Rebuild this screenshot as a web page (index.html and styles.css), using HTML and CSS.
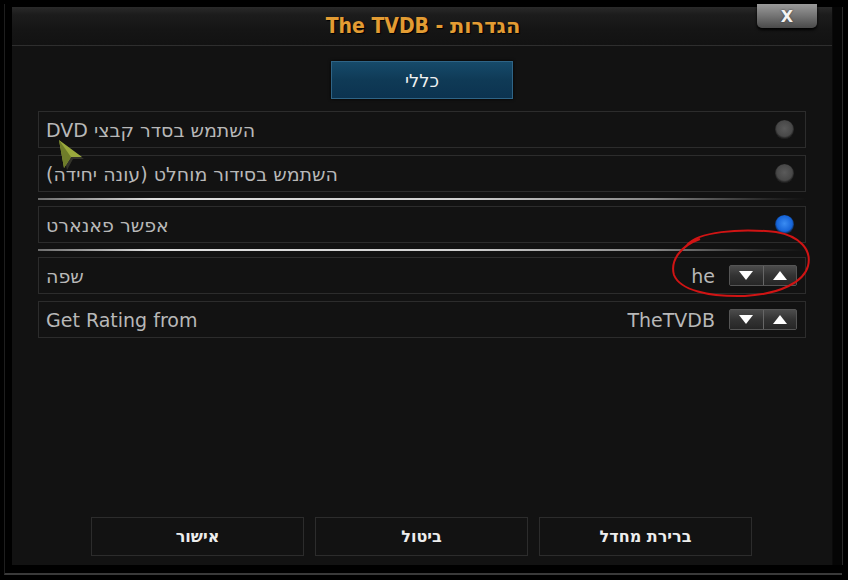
FILE: index.html
```html
<!DOCTYPE html>
<html lang="he">
<head>
    <meta charset="UTF-8">
    <title>The TVDB - הגדרות</title>
    <link rel="stylesheet" href="styles.css">
</head>
<body>
    <div class="frame">
        <div class="dialog">
            <header class="dialog-header">
                <h1>The TVDB - <span dir="rtl">הגדרות</span></h1>
                <a href="#" class="close">X</a>
            </header>

            <div class="tabs">
                <div class="tab active" dir="rtl">כללי</div>
            </div>

            <div class="settings">
                <div class="row">
                    <span class="label" dir="rtl">השתמש בסדר קבצי DVD</span>
                    <span class="radio"></span>
                </div>
                <div class="row next">
                    <span class="label" dir="rtl">השתמש בסידור מוחלט (עונה יחידה)</span>
                    <span class="radio"></span>
                </div>
                <div class="separator"></div>
                <div class="row">
                    <span class="label" dir="rtl">אפשר פאנארט</span>
                    <span class="radio on"></span>
                </div>
                <div class="separator"></div>
                <div class="row">
                    <span class="label" dir="rtl">שפה</span>
                    <span class="value">he</span>
                    <span class="spinner">
                        <span class="spin down"></span>
                        <span class="spin up"></span>
                    </span>
                </div>
                <div class="row next">
                    <span class="label">Get Rating from</span>
                    <span class="value">TheTVDB</span>
                    <span class="spinner">
                        <span class="spin down"></span>
                        <span class="spin up"></span>
                    </span>
                </div>
            </div>

            <div class="buttons">
                <a href="#" class="button" dir="rtl">אישור</a>
                <a href="#" class="button" dir="rtl">ביטול</a>
                <a href="#" class="button" dir="rtl">ברירת מחדל</a>
            </div>
        </div>
    </div>

    <!-- hand drawn mark on the screenshot -->
    <svg class="scribble" width="848" height="580" viewBox="0 0 848 580">
        <path d="M687 245 C698 232 738 228 776 232 C800 236 812 250 808 266 C804 282 780 294 745 296 C708 297 680 290 674 275 C670 261 680 246 700 239" fill="none" stroke="#d01414" stroke-width="2"/>
    </svg>

    <svg class="cursor" width="30" height="32" viewBox="0 0 30 32">
        <polygon points="2,2 25,19 14,19 8,30" fill="#4a4a3a" opacity="0.6" transform="translate(1,1)"/>
        <polygon points="1,1 24,18 13,18 6,29" fill="#9aaa3c"/>
        <polygon points="1,1 13,18 6,29" fill="#6f7d2a"/>
    </svg>
</body>
</html>
```

FILE: styles.css
```css
* {
    margin: 0;
    padding: 0;
    box-sizing: border-box;
    font-family: "DejaVu Sans", sans-serif;
}

body {
    background: #000;
    width: 848px;
    height: 580px;
    overflow: hidden;
    position: relative;
}

a {
    text-decoration: none;
    color: inherit;
}

.frame {
    margin: 4px 6px 0 4px;
    height: 571px;
    border-left: 1px solid #1e1e1e;
    border-bottom: 2px solid #3a3a3a;
    padding: 3px 8px 6px 7px;
}

.dialog {
    height: 558px;
    width: 821px;
    background: #121212;
    border-right: 1px solid #0a0a0a;
    box-shadow: 9px 0 0 #050505, 10px 0 0 #2a2a2a;
    display: flex;
    flex-direction: column;
}

.dialog-header {
    height: 39px;
    background: linear-gradient(180deg, #2a2a2a 0%, #1c1c1c 20%, #151515 60%, #121212 100%);
    border-bottom: 1px solid #2e2e2e;
    display: flex;
    justify-content: center;
    align-items: center;
    position: relative;
}

.dialog-header h1 {
    font-family: "DejaVu Sans Condensed", "DejaVu Sans", sans-serif;
    font-weight: bold;
    font-size: 21px;
    color: #e39c33;
    text-shadow: 1px 1px 1px #000;
    margin-left: 2px;
}

.close {
    position: absolute;
    top: -3px;
    right: 15px;
    width: 60px;
    height: 24px;
    border-radius: 0 0 5px 5px;
    background: linear-gradient(180deg, #9a9a9a 0%, #777 45%, #4a4a4a 100%);
    box-shadow: 0 2px 3px #000;
    color: #f4f4f4;
    font-weight: bold;
    font-size: 16px;
    text-align: center;
    line-height: 26px;
    text-shadow: 0 0 2px #333;
}

.tabs {
    display: flex;
    justify-content: center;
    margin-top: 15px;
}

.tab {
    width: 182px;
    height: 38px;
    background: linear-gradient(180deg, #164a6a 0%, #0f3a56 50%, #0c3350 100%);
    border: 1px solid #2f6486;
    box-shadow: 0 0 3px #000;
    color: #f0f0f0;
    font-size: 18px;
    display: flex;
    justify-content: center;
    align-items: center;
}

.settings {
    margin: 12px 0 0 26px;
    width: 768px;
    display: flex;
    flex-direction: column;
    gap: 6px;
}

.row {
    height: 37px;
    border: 1px solid #2c2c2c;
    display: flex;
    align-items: center;
    padding: 0 8px 0 7px;
    color: #b8b8b8;
    font-size: 19px;
}

.row.next {
    margin-top: 1px;
}

.label {
    flex: 1;
    text-align: left;
}

.radio {
    width: 19px;
    height: 19px;
    border-radius: 50%;
    background: radial-gradient(circle at 50% 45%, #5a5a5a 0%, #484848 55%, #1e1e1e 70%, #6a6a6a 84%, #2a2a2a 100%);
    margin-right: 3px;
}

.radio.on {
    background: radial-gradient(circle at 50% 45%, #3a8cf2 0%, #1664d8 55%, #0c2a55 70%, #6a6a6a 84%, #2a2a2a 100%);
}

.value {
    margin-right: 14px;
}

.spinner {
    display: flex;
    width: 68px;
    height: 21px;
    border: 1px solid #555;
    border-radius: 2px;
    background: #2a2a2a;
}

.spin {
    flex: 1;
    background: linear-gradient(180deg, #4c4c4c 0%, #333 50%, #262626 100%);
    display: flex;
    justify-content: center;
    align-items: center;
}

.spin + .spin {
    border-left: 1px solid #666;
}

.spin.down::after {
    content: '';
    border-left: 7px solid transparent;
    border-right: 7px solid transparent;
    border-top: 9px solid #fff;
}

.spin.up::after {
    content: '';
    border-left: 7px solid transparent;
    border-right: 7px solid transparent;
    border-bottom: 9px solid #fff;
}

.separator {
    height: 2px;
    background: linear-gradient(90deg, rgba(200, 200, 200, 0.5) 0%, #e0e0e0 15%, #d0d0d0 55%, #888 80%, rgba(120, 120, 120, 0.2) 95%, transparent 100%);
}

.buttons {
    margin: auto 0 9px 79px;
    display: flex;
    gap: 11px;
}

.button {
    width: 213px;
    height: 39px;
    border: 1px solid #2c2c2c;
    color: #ededed;
    font-size: 16px;
    font-weight: bold;
    display: flex;
    justify-content: center;
    align-items: center;
}

.scribble {
    position: absolute;
    top: 0;
    left: 0;
    pointer-events: none;
}

.cursor {
    position: absolute;
    left: 58px;
    top: 139px;
    pointer-events: none;
}
```
